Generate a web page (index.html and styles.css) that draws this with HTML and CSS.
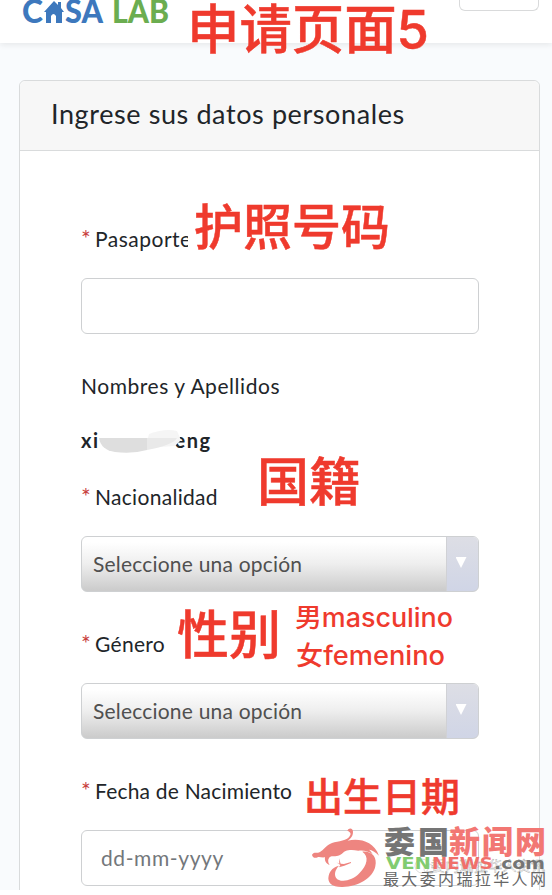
FILE: index.html
```html
<!DOCTYPE html>
<html lang="es">
<head>
    <meta charset="UTF-8">
    <meta name="viewport" content="width=device-width, initial-scale=1.0">
    <title>Casa Lab</title>
    <link rel="stylesheet" href="styles.css">
</head>
<body>
    <div class="page">
        <header class="navbar">
            <svg class="logo" width="150" height="26" viewBox="0 0 150 26">
                <g class="logo-blue">
                    <text x="0" y="23" textLength="21" lengthAdjust="spacingAndGlyphs">C</text>
                    <path d="M22 12 L32 1 L36 5 V2 H39 V8 L42 12 H40 V23 H34 V16 Q31.500 12 29 16 V23 H24 V12 Z"/>
                    <text x="43" y="23" textLength="38" lengthAdjust="spacingAndGlyphs">SA</text>
                </g>
                <text class="logo-green" x="90" y="23" textLength="57" lengthAdjust="spacingAndGlyphs">LAB</text>
            </svg>
            <button class="menu-button"></button>
        </header>

        <main class="card">
            <h1 class="card-header"><span>Ingrese sus datos personales</span></h1>
            <form class="card-body">
                <div class="group">
                    <label class="pasaporte"><i>*</i>Pasaporte</label>
                    <div class="field"></div>
                </div>
                <div class="group name">
                    <label class="nombres">Nombres y Apellidos</label>
                    <div class="value">
                        <b>xi</b>
                        <svg class="smudge" width="82" height="26" viewBox="0 0 82 26">
                            <path fill="#f5f5f5" d="M50 6 Q66 0 78 3 L82 12 L76 18 L46 20 Z"/>
                            <path fill="#dedede" d="M0 10 H48 V22 Q34 26 16 24 Q2 22 0 10 Z"/>
                            <path fill="#e9e9e9" d="M48 10 H78 Q74 17 48 22 Z"/>
                        </svg>
                        <b>eng</b>
                    </div>
                </div>
                <div class="group">
                    <label class="nacionalidad"><i>*</i>Nacionalidad</label>
                    <div class="field select"><span>Seleccione una opción</span><div class="arrow"></div></div>
                </div>
                <div class="group">
                    <label class="genero"><i>*</i>Género</label>
                    <div class="field select"><span>Seleccione una opción</span><div class="arrow"></div></div>
                </div>
                <div class="group">
                    <label class="fecha"><i>*</i>Fecha de Nacimiento</label>
                    <div class="field date"><span>dd-mm-yyyy</span></div>
                </div>
            </form>
        </main>

        <!-- translated notes over the form -->
        <svg class="notes" width="552" height="890" viewBox="0 0 552 890" lang="zh-CN">
            <g class="note">
                <text x="187" y="49" font-size="53" textLength="242" lengthAdjust="spacingAndGlyphs">申请页面5</text>
                <text x="194" y="245" font-size="49">护照号码</text>
                <text x="257" y="501" font-size="52">国籍</text>
                <text x="177" y="654" font-size="52">性别</text>
                <text x="304" y="811" font-size="39">出生日期</text>
            </g>
            <g class="note small">
                <text x="295" y="627" textLength="158" lengthAdjust="spacingAndGlyphs">男masculino</text>
                <text x="296" y="665" textLength="149" lengthAdjust="spacingAndGlyphs">女femenino</text>
            </g>

            <g class="ghost">
                <circle cx="422" cy="866" r="7"/>
                <circle cx="429" cy="869" r="5"/>
                <text x="431" y="871" textLength="114">委内瑞拉华人资讯</text>
            </g>
            <g class="brand">
                <g transform="translate(300 815) scale(.3333)" fill="#ee8580">
                    <path d="M36 119 C43 109 51 116 60 111 C72 104 78 91 96 84 C115 77 142 80 151 60 C154 52 146 49 142 47 C147 36 160 40 159 51 C159 64 151 72 143 77 C177 69 221 78 237 122 C226 110 216 105 207 104 C212 108 216 113 218 118 C205 108 190 105 175 107 C145 102 134 108 126 116 C117 124 103 123 95 124 C83 127 82 141 89 150 C79 147 73 137 75 127 C65 129 58 124 53 127 C44 131 37 127 36 119 Z"/>
                    <path d="M187 110 C218 108 232 128 226 154 C219 190 172 217 125 216 C95 216 81 202 86 182 C90 165 102 156 117 152 C105 165 102 178 108 188 C119 205 157 198 178 175 C202 150 208 124 187 110 Z"/>
                    <path d="M109 142 L118 146 L117 130 L122 146 L132 147 L153 141 L153 144 L133 152 L117 157 L121 150 Z"/>
                </g>
                <text class="title gray" x="384" y="853" textLength="65">委国</text>
                <text class="title pink" x="449" y="853" textLength="97">新闻网</text>
                <text class="domain green" x="386" y="869" textLength="45" lengthAdjust="spacingAndGlyphs">VEN</text>
                <text class="domain red" x="432" y="869" textLength="61" lengthAdjust="spacingAndGlyphs">NEWS</text>
                <text class="domain gray" x="494" y="869" textLength="51" lengthAdjust="spacingAndGlyphs">.com</text>
                <text class="slogan" x="383" y="885" textLength="163">最大委内瑞拉华人网</text>
            </g>
        </svg>
    </div>
</body>
</html>
```

FILE: styles.css
```css
* {
    box-sizing: border-box;
}
body {
    margin: 0;
    background-color: #fff;
    color: #212529;
    font-family: Lato, "Noto Sans CJK SC", sans-serif;
    overflow: hidden;
}
.page {
    position: relative;
    height: 890px;
    overflow: hidden;
    background-color: #f9fbfd;
}
.navbar {
    display: flex;
    justify-content: space-between;
    align-items: flex-start;
    height: 43px;
    padding: 0 13px 0 22px;
    background-color: #fff;
    box-shadow: 0 2px 6px rgba(0, 0, 0, 0.08);
}
.logo {
    font-size: 32px;
    font-weight: 900;
}
.logo-blue {
    fill: #3d78bd;
}
.logo-green {
    fill: #6bad50;
}
.menu-button {
    width: 80px;
    height: 11px;
    padding: 0;
    background-color: #fff;
    border: 1px solid #d9dadb;
    border-top: none;
    border-radius: 0 0 6px 6px;
}
.card {
    height: 840px;
    margin: 37px 12px 0 19px;
    background-color: #fff;
    border: 1px solid #d9dbdc;
    border-radius: 6px;
}
.card-header {
    display: flex;
    align-items: center;
    height: 70px;
    margin: 0;
    padding: 0 0 4px 31px;
    background-color: #f7f7f7;
    border-bottom: 1px solid #d9dbdc;
    border-radius: 6px 6px 0 0;
    font-size: 27px;
    font-weight: 400;
    letter-spacing: 0.6px;
}
.card-body {
    padding: 73px 61px 0;
}
.group {
    display: flex;
    flex-direction: column;
    gap: 22px;
    height: 110px;
    margin-bottom: 37px;
}
.name {
    height: 111px;
    margin-bottom: 0;
}
label {
    display: flex;
    height: 32px;
    font-size: 21px;
    line-height: 29px;
    letter-spacing: 0.3px;
    white-space: nowrap;
}
label i {
    flex: none;
    width: 14px;
    color: #c8403e;
    font-size: 23px;
    font-style: normal;
}
.pasaporte {
    width: 107px;
    overflow: hidden;
    letter-spacing: 0.5px;
}
.nombres {
    letter-spacing: 0.55px;
}
.fecha {
    letter-spacing: 0.2px;
}
.field {
    display: flex;
    align-items: center;
    width: 398px;
    height: 56px;
    border: 1px solid #ced0d2;
    border-radius: 6px;
    font-size: 21px;
    letter-spacing: 0.6px;
}
.select {
    justify-content: space-between;
    padding-left: 11px;
    color: #505050;
    background: linear-gradient(#fff 10%, #eee 50%, #ccc 98%);
    letter-spacing: 0.2px;
    overflow: hidden;
}
.select span {
    padding-bottom: 2px;
}
.arrow {
    display: flex;
    justify-content: center;
    width: 32px;
    height: 54px;
    padding: 20px 3px 0 0;
    background: linear-gradient(#dddee5, #d0d5e6);
    border-left: 1px solid #d0d1d5;
}
.arrow::before {
    content: "";
    width: 11px;
    height: 11px;
    background-color: #fff;
    clip-path: polygon(0 0, 100% 0, 50% 100%);
}
.date {
    padding: 0 0 2px 19px;
    color: #73777b;
}
.value {
    display: flex;
    height: 32px;
    font-size: 20px;
    line-height: 30px;
    letter-spacing: 1.5px;
}
.smudge {
    position: relative;
    margin: 3px -6px 0 -1px;
}
.notes {
    position: absolute;
    top: 0;
    left: 0;
}
.note {
    fill: #ef3a2d;
    stroke: #ef3a2d;
    stroke-width: 0.5px;
    font-family: Inter, "Noto Sans CJK SC", sans-serif;
    font-weight: 500;
}
.small {
    font-size: 26px;
    stroke: none;
}
.ghost {
    fill: none;
    stroke: #aaa;
    stroke-width: 0.4px;
    font-family: "Noto Sans CJK SC", sans-serif;
    font-size: 14px;
}
.brand {
    font-family: "Noto Sans CJK SC", sans-serif;
}
.title {
    font-size: 31px;
    font-weight: 900;
}
.domain {
    font-family: "DejaVu Sans", sans-serif;
    font-size: 16px;
    font-weight: 700;
}
.slogan {
    fill: #666;
    font-size: 16px;
}
.gray {
    fill: #757575;
}
.pink {
    fill: #f27773;
}
.green {
    fill: #82cc70;
}
.red {
    fill: #f0706b;
}
```
